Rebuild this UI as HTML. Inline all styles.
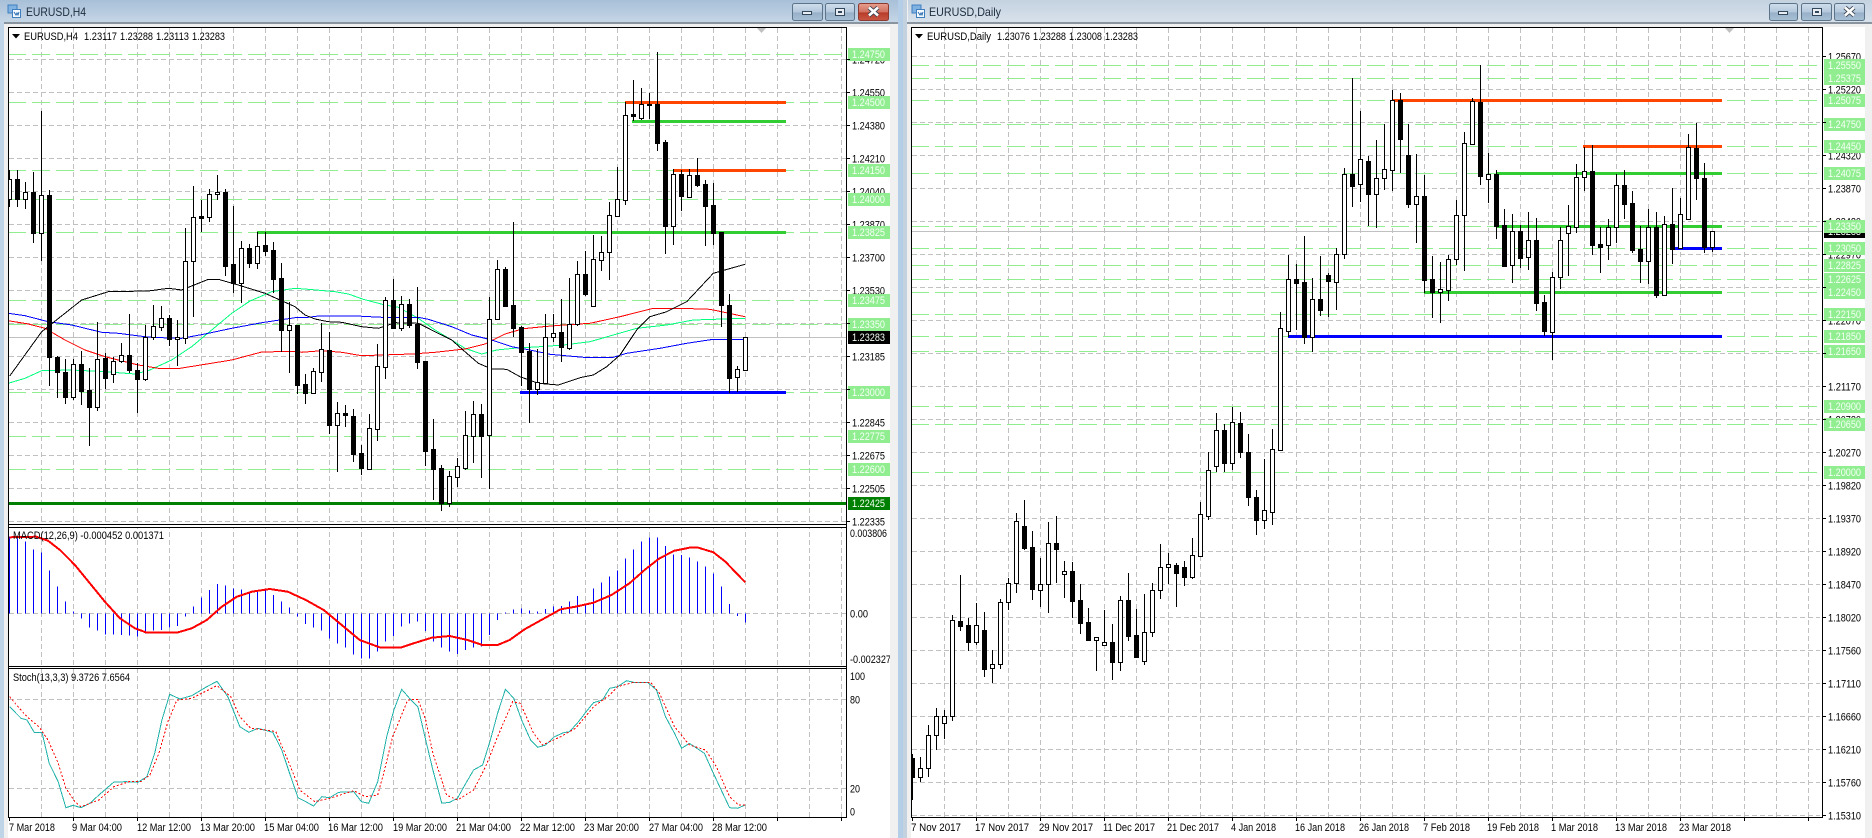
<!DOCTYPE html>
<html><head><meta charset="utf-8"><title>EURUSD</title>
<style>
html,body{margin:0;padding:0;background:#f0f0f0;width:1872px;height:838px;overflow:hidden}
svg{display:block}
text{font-family:"Liberation Sans",sans-serif;font-size:11px;fill:#000}
.w text,text.w{fill:#f4fff4}
.t{font-size:12px;fill:#1c2c3c}
</style></head><body>
<svg xmlns="http://www.w3.org/2000/svg" width="1872" height="838" viewBox="0 0 1872 838">
<defs>
<linearGradient id="t1" x1="0" y1="0" x2="0" y2="1"><stop offset="0" stop-color="#a8c0d8"/><stop offset="1" stop-color="#c6d6e6"/></linearGradient>
<linearGradient id="t2" x1="0" y1="0" x2="0" y2="1"><stop offset="0" stop-color="#c4d2e0"/><stop offset="1" stop-color="#d8e2ec"/></linearGradient>
<linearGradient id="b" x1="0" y1="0" x2="0" y2="1"><stop offset="0" stop-color="#d0deec"/><stop offset=".5" stop-color="#b4c8dc"/><stop offset=".55" stop-color="#98b0c8"/><stop offset="1" stop-color="#a8c0d6"/></linearGradient>
<linearGradient id="r" x1="0" y1="0" x2="0" y2="1"><stop offset="0" stop-color="#e8a090"/><stop offset=".5" stop-color="#d07060"/><stop offset=".55" stop-color="#b83c28"/><stop offset="1" stop-color="#c85844"/></linearGradient>
<clipPath id="lm"><rect x="9" y="28" width="837" height="496"/></clipPath>
<clipPath id="lw"><rect x="9" y="28" width="837" height="790"/></clipPath>
<clipPath id="rm"><rect x="912" y="28" width="910" height="790"/></clipPath>
</defs>
<rect width="1872" height="838" fill="#f0f0f0"/>
<rect x="0" y="0" width="898" height="23" fill="url(#t1)"/>
<rect x="908" y="0" width="964" height="23" fill="url(#t2)"/>
<rect x="0" y="23" width="4" height="815" fill="#c0d4e8"/>
<rect x="898" y="0" width="5" height="838" fill="#b4cee8"/>
<rect x="903" y="0" width="4" height="838" fill="#c4d2e0"/>
<rect x="4" y="22" width="894" height="2" fill="#8a949e"/>
<rect x="907" y="22" width="965" height="2" fill="#8a949e"/>
<rect x="8" y="27" width="882" height="811" fill="#fff"/>
<rect x="911" y="27" width="954" height="811" fill="#fff"/>

<!-- title icons -->
<g shape-rendering="crispEdges">
<rect x="8" y="5" width="9" height="8" fill="#7fb2e0" stroke="#3f7fc0"/><rect x="12.5" y="9.5" width="8" height="8" fill="#f4f9ff" stroke="#3f7fc0"/>
<rect x="912" y="5" width="9" height="8" fill="#7fb2e0" stroke="#3f7fc0"/><rect x="916.5" y="9.5" width="8" height="8" fill="#f4f9ff" stroke="#3f7fc0"/>
</g>
<path d="M14 12l2 3 1-2 1 2 1-3M918 12l2 3 1-2 1 2 1-3" fill="none" stroke="#2a6cb0"/>
<text class="t" x="26" y="16" textLength="60" lengthAdjust="spacingAndGlyphs">EURUSD,H4</text>
<text class="t" x="929" y="16" textLength="72" lengthAdjust="spacingAndGlyphs">EURUSD,Daily</text>

<!-- window buttons -->
<g stroke="#5c7489">
<rect x="792.5" y="3.5" width="30" height="17" rx="2" fill="url(#b)"/>
<rect x="825.5" y="3.5" width="29" height="17" rx="2" fill="url(#b)"/>
<rect x="858.5" y="3.5" width="30" height="17" rx="2" fill="url(#r)" stroke="#8c3a30"/>
<rect x="1769.5" y="3.5" width="28" height="17" rx="2" fill="url(#b)"/>
<rect x="1801.5" y="3.5" width="30" height="17" rx="2" fill="url(#b)"/>
<rect x="1834.5" y="3.5" width="30" height="17" rx="2" fill="url(#b)"/>
</g>
<g shape-rendering="crispEdges" stroke="#33475a" fill="#e8eef4">
<rect x="802.5" y="11.5" width="9" height="3"/><rect x="1778.5" y="11.5" width="9" height="3"/>
<rect x="835.5" y="8.5" width="9" height="7"/><rect x="1812.5" y="8.5" width="9" height="7"/>
</g>
<rect x="838" y="11" width="4" height="2" fill="#33475a"/><rect x="1815" y="11" width="4" height="2" fill="#33475a"/>
<path d="M869 7.5l9 8M878 7.5l-9 8M1845 7.5l9 8M1854 7.5l-9 8" stroke="#3a4450" stroke-width="4.4" fill="none"/>
<path d="M869 7.5l9 8M878 7.5l-9 8M1845 7.5l9 8M1854 7.5l-9 8" stroke="#fff" stroke-width="2.6" fill="none"/>

<g id="lg" shape-rendering="crispEdges"></g>
<g id="lmain" clip-path="url(#lm)" shape-rendering="crispEdges"></g>
<g id="lsub" clip-path="url(#lw)" shape-rendering="crispEdges"></g>
<g id="rmain" clip-path="url(#rm)" shape-rendering="crispEdges"></g>

<!-- panel borders -->
<g shape-rendering="crispEdges">
<rect x="9" y="524" width="838" height="4" fill="#fff"/><rect x="9" y="666" width="838" height="3" fill="#fff"/>
<rect x="8" y="27" width="839" height="1" fill="#000"/>
<rect x="8" y="524" width="839" height="1" fill="#000"/><rect x="8" y="527" width="839" height="1" fill="#000"/>
<rect x="8" y="666" width="839" height="1" fill="#000"/><rect x="8" y="668" width="839" height="1" fill="#000"/>
<rect x="8" y="817" width="839" height="1" fill="#000"/>
<rect x="8" y="27" width="1" height="791" fill="#000"/><rect x="846" y="27" width="1" height="791" fill="#000"/>
<rect x="911" y="27" width="912" height="1" fill="#000"/><rect x="911" y="817" width="912" height="1" fill="#000"/>
<rect x="911" y="27" width="1" height="791" fill="#000"/><rect x="1822" y="27" width="1" height="791" fill="#000"/>
</g>
<path d="M12 34h8l-4 4.5zM915 34h8l-4 4.5z" fill="#000"/>
<path d="M757 28h9l-4.500 5zM1725 28h9l-4.500 5z" fill="#c0c0c0"/>

<!-- chart headers -->
<text x="24" y="40" textLength="54" lengthAdjust="spacingAndGlyphs">EURUSD,H4</text>
<text x="84" y="40" textLength="33" lengthAdjust="spacingAndGlyphs">1.23117</text>
<text x="120" y="40" textLength="33" lengthAdjust="spacingAndGlyphs">1.23288</text>
<text x="156" y="40" textLength="33" lengthAdjust="spacingAndGlyphs">1.23113</text>
<text x="192" y="40" textLength="33" lengthAdjust="spacingAndGlyphs">1.23283</text>
<text x="927" y="40" textLength="64" lengthAdjust="spacingAndGlyphs">EURUSD,Daily</text>
<text x="997" y="40" textLength="33" lengthAdjust="spacingAndGlyphs">1.23076</text>
<text x="1033" y="40" textLength="33" lengthAdjust="spacingAndGlyphs">1.23288</text>
<text x="1069" y="40" textLength="33" lengthAdjust="spacingAndGlyphs">1.23008</text>
<text x="1105" y="40" textLength="33" lengthAdjust="spacingAndGlyphs">1.23283</text>
<text x="13" y="539" textLength="151" lengthAdjust="spacingAndGlyphs">MACD(12,26,9) -0.000452 0.001371</text>
<text x="13" y="681" textLength="117" lengthAdjust="spacingAndGlyphs">Stoch(13,3,3) 9.3726 7.6564</text>

<!-- left price axis -->
<g>
<text x="852" y="63.500" textLength="33" lengthAdjust="spacingAndGlyphs">1.24720</text>
<text x="852" y="96.500" textLength="33" lengthAdjust="spacingAndGlyphs">1.24550</text>
<text x="852" y="129.500" textLength="33" lengthAdjust="spacingAndGlyphs">1.24380</text>
<text x="852" y="162.500" textLength="33" lengthAdjust="spacingAndGlyphs">1.24210</text>
<text x="852" y="195.500" textLength="33" lengthAdjust="spacingAndGlyphs">1.24040</text>
<text x="852" y="228.500" textLength="33" lengthAdjust="spacingAndGlyphs">1.23870</text>
<text x="852" y="261.500" textLength="33" lengthAdjust="spacingAndGlyphs">1.23700</text>
<text x="852" y="294.500" textLength="33" lengthAdjust="spacingAndGlyphs">1.23530</text>
<text x="852" y="327.500" textLength="33" lengthAdjust="spacingAndGlyphs">1.23360</text>
<text x="852" y="360.500" textLength="33" lengthAdjust="spacingAndGlyphs">1.23185</text>
<text x="852" y="393.500" textLength="33" lengthAdjust="spacingAndGlyphs">1.23015</text>
<text x="852" y="426.500" textLength="33" lengthAdjust="spacingAndGlyphs">1.22845</text>
<text x="852" y="459.500" textLength="33" lengthAdjust="spacingAndGlyphs">1.22675</text>
<text x="852" y="492.500" textLength="33" lengthAdjust="spacingAndGlyphs">1.22505</text>
<text x="852" y="525.500" textLength="33" lengthAdjust="spacingAndGlyphs">1.22335</text>
<text x="850" y="537" textLength="37" lengthAdjust="spacingAndGlyphs">0.003806</text>
<text x="850" y="617.500" textLength="18" lengthAdjust="spacingAndGlyphs">0.00</text>
<text x="850" y="663" textLength="41" lengthAdjust="spacingAndGlyphs">-0.002327</text>
<text x="850" y="680" textLength="15" lengthAdjust="spacingAndGlyphs">100</text>
<text x="850" y="703.500" textLength="10" lengthAdjust="spacingAndGlyphs">80</text>
<text x="850" y="792.500" textLength="10" lengthAdjust="spacingAndGlyphs">20</text>
<text x="850" y="815.500" textLength="5" lengthAdjust="spacingAndGlyphs">0</text>
</g>
<rect x="890" y="524" width="8" height="150" fill="#f0f0f0"/>
<g shape-rendering="crispEdges">
<rect x="848" y="331" width="42" height="13" fill="#000"/>
<rect x="848" y="497" width="42" height="13" fill="#008000"/>
<g fill="#90ee90">
<rect x="848" y="48" width="42" height="13"/><rect x="848" y="96" width="42" height="13"/><rect x="848" y="164" width="42" height="13"/><rect x="848" y="193" width="42" height="13"/><rect x="848" y="226" width="42" height="13"/><rect x="848" y="294" width="42" height="13"/><rect x="848" y="318" width="42" height="13"/><rect x="848" y="386" width="42" height="13"/><rect x="848" y="430" width="42" height="13"/><rect x="848" y="463" width="42" height="13"/>
</g></g>
<g class="w">
<text x="852" y="58" textLength="33" lengthAdjust="spacingAndGlyphs">1.24750</text>
<text x="852" y="106" textLength="33" lengthAdjust="spacingAndGlyphs">1.24500</text>
<text x="852" y="174" textLength="33" lengthAdjust="spacingAndGlyphs">1.24150</text>
<text x="852" y="203" textLength="33" lengthAdjust="spacingAndGlyphs">1.24000</text>
<text x="852" y="236" textLength="33" lengthAdjust="spacingAndGlyphs">1.23825</text>
<text x="852" y="304" textLength="33" lengthAdjust="spacingAndGlyphs">1.23475</text>
<text x="852" y="328" textLength="33" lengthAdjust="spacingAndGlyphs">1.23350</text>
<text x="852" y="341" textLength="33" lengthAdjust="spacingAndGlyphs">1.23283</text>
<text x="852" y="396" textLength="33" lengthAdjust="spacingAndGlyphs">1.23000</text>
<text x="852" y="440" textLength="33" lengthAdjust="spacingAndGlyphs">1.22775</text>
<text x="852" y="473" textLength="33" lengthAdjust="spacingAndGlyphs">1.22600</text>
<text x="852" y="507" textLength="33" lengthAdjust="spacingAndGlyphs">1.22425</text>
</g>

<!-- right price axis -->
<g>
<text x="1828" y="60.500" textLength="33" lengthAdjust="spacingAndGlyphs">1.25670</text>
<text x="1828" y="93.500" textLength="33" lengthAdjust="spacingAndGlyphs">1.25220</text>
<text x="1828" y="126.500" textLength="33" lengthAdjust="spacingAndGlyphs">1.24770</text>
<text x="1828" y="159.500" textLength="33" lengthAdjust="spacingAndGlyphs">1.24320</text>
<text x="1828" y="192.500" textLength="33" lengthAdjust="spacingAndGlyphs">1.23870</text>
<text x="1828" y="225.500" textLength="33" lengthAdjust="spacingAndGlyphs">1.23420</text>
<text x="1828" y="258.500" textLength="33" lengthAdjust="spacingAndGlyphs">1.22970</text>
<text x="1828" y="291.500" textLength="33" lengthAdjust="spacingAndGlyphs">1.22520</text>
<text x="1828" y="324.500" textLength="33" lengthAdjust="spacingAndGlyphs">1.22070</text>
<text x="1828" y="357.500" textLength="33" lengthAdjust="spacingAndGlyphs">1.21620</text>
<text x="1828" y="390.500" textLength="33" lengthAdjust="spacingAndGlyphs">1.21170</text>
<text x="1828" y="423.500" textLength="33" lengthAdjust="spacingAndGlyphs">1.20720</text>
<text x="1828" y="456.500" textLength="33" lengthAdjust="spacingAndGlyphs">1.20270</text>
<text x="1828" y="489.500" textLength="33" lengthAdjust="spacingAndGlyphs">1.19820</text>
<text x="1828" y="522.500" textLength="33" lengthAdjust="spacingAndGlyphs">1.19370</text>
<text x="1828" y="555.500" textLength="33" lengthAdjust="spacingAndGlyphs">1.18920</text>
<text x="1828" y="588.500" textLength="33" lengthAdjust="spacingAndGlyphs">1.18470</text>
<text x="1828" y="621.500" textLength="33" lengthAdjust="spacingAndGlyphs">1.18020</text>
<text x="1828" y="654.500" textLength="33" lengthAdjust="spacingAndGlyphs">1.17560</text>
<text x="1828" y="687.500" textLength="33" lengthAdjust="spacingAndGlyphs">1.17110</text>
<text x="1828" y="720.500" textLength="33" lengthAdjust="spacingAndGlyphs">1.16660</text>
<text x="1828" y="753.500" textLength="33" lengthAdjust="spacingAndGlyphs">1.16210</text>
<text x="1828" y="786.500" textLength="33" lengthAdjust="spacingAndGlyphs">1.15760</text>
<text x="1828" y="819.500" textLength="33" lengthAdjust="spacingAndGlyphs">1.15310</text>
</g>
<g shape-rendering="crispEdges">
<rect x="1824" y="225" width="41" height="13" fill="#000"/>
</g>
<text class="w" x="1828" y="235" textLength="33" lengthAdjust="spacingAndGlyphs">1.23283</text>
<g shape-rendering="crispEdges" fill="#90ee90">
<rect x="1824" y="59" width="41" height="13"/><rect x="1824" y="72" width="41" height="13"/><rect x="1824" y="94" width="41" height="13"/><rect x="1824" y="118" width="41" height="13"/><rect x="1824" y="140" width="41" height="13"/><rect x="1824" y="167" width="41" height="13"/><rect x="1824" y="220" width="41" height="13"/><rect x="1824" y="242" width="41" height="13"/><rect x="1824" y="259" width="41" height="13"/><rect x="1824" y="273" width="41" height="13"/><rect x="1824" y="286" width="41" height="13"/><rect x="1824" y="308" width="41" height="13"/><rect x="1824" y="330" width="41" height="13"/><rect x="1824" y="345" width="41" height="13"/><rect x="1824" y="400" width="41" height="13"/><rect x="1824" y="418" width="41" height="13"/><rect x="1824" y="466" width="41" height="13"/>
</g>
<g class="w">
<text x="1828" y="69" textLength="33" lengthAdjust="spacingAndGlyphs">1.25550</text>
<text x="1828" y="82" textLength="33" lengthAdjust="spacingAndGlyphs">1.25375</text>
<text x="1828" y="104" textLength="33" lengthAdjust="spacingAndGlyphs">1.25075</text>
<text x="1828" y="128" textLength="33" lengthAdjust="spacingAndGlyphs">1.24750</text>
<text x="1828" y="150" textLength="33" lengthAdjust="spacingAndGlyphs">1.24450</text>
<text x="1828" y="177" textLength="33" lengthAdjust="spacingAndGlyphs">1.24075</text>
<text x="1828" y="230" textLength="33" lengthAdjust="spacingAndGlyphs">1.23350</text>
<text x="1828" y="252" textLength="33" lengthAdjust="spacingAndGlyphs">1.23050</text>
<text x="1828" y="269" textLength="33" lengthAdjust="spacingAndGlyphs">1.22825</text>
<text x="1828" y="283" textLength="33" lengthAdjust="spacingAndGlyphs">1.22625</text>
<text x="1828" y="296" textLength="33" lengthAdjust="spacingAndGlyphs">1.22450</text>
<text x="1828" y="318" textLength="33" lengthAdjust="spacingAndGlyphs">1.22150</text>
<text x="1828" y="340" textLength="33" lengthAdjust="spacingAndGlyphs">1.21850</text>
<text x="1828" y="355" textLength="33" lengthAdjust="spacingAndGlyphs">1.21650</text>
<text x="1828" y="410" textLength="33" lengthAdjust="spacingAndGlyphs">1.20900</text>
<text x="1828" y="428" textLength="33" lengthAdjust="spacingAndGlyphs">1.20650</text>
<text x="1828" y="476" textLength="33" lengthAdjust="spacingAndGlyphs">1.20000</text>
</g>

<!-- time axes -->
<g>
<text x="9" y="831" textLength="46" lengthAdjust="spacingAndGlyphs">7 Mar 2018</text>
<text x="72" y="831" textLength="50" lengthAdjust="spacingAndGlyphs">9 Mar 04:00</text>
<text x="137" y="831" textLength="54" lengthAdjust="spacingAndGlyphs">12 Mar 12:00</text>
<text x="200" y="831" textLength="55" lengthAdjust="spacingAndGlyphs">13 Mar 20:00</text>
<text x="264" y="831" textLength="55" lengthAdjust="spacingAndGlyphs">15 Mar 04:00</text>
<text x="328" y="831" textLength="55" lengthAdjust="spacingAndGlyphs">16 Mar 12:00</text>
<text x="393" y="831" textLength="54" lengthAdjust="spacingAndGlyphs">19 Mar 20:00</text>
<text x="456" y="831" textLength="55" lengthAdjust="spacingAndGlyphs">21 Mar 04:00</text>
<text x="520" y="831" textLength="55" lengthAdjust="spacingAndGlyphs">22 Mar 12:00</text>
<text x="584" y="831" textLength="55" lengthAdjust="spacingAndGlyphs">23 Mar 20:00</text>
<text x="649" y="831" textLength="54" lengthAdjust="spacingAndGlyphs">27 Mar 04:00</text>
<text x="712" y="831" textLength="55" lengthAdjust="spacingAndGlyphs">28 Mar 12:00</text>
<text x="911" y="831" textLength="50" lengthAdjust="spacingAndGlyphs">7 Nov 2017</text>
<text x="975" y="831" textLength="54" lengthAdjust="spacingAndGlyphs">17 Nov 2017</text>
<text x="1039" y="831" textLength="54" lengthAdjust="spacingAndGlyphs">29 Nov 2017</text>
<text x="1103" y="831" textLength="52" lengthAdjust="spacingAndGlyphs">11 Dec 2017</text>
<text x="1167" y="831" textLength="52" lengthAdjust="spacingAndGlyphs">21 Dec 2017</text>
<text x="1231" y="831" textLength="45" lengthAdjust="spacingAndGlyphs">4 Jan 2018</text>
<text x="1295" y="831" textLength="50" lengthAdjust="spacingAndGlyphs">16 Jan 2018</text>
<text x="1359" y="831" textLength="50" lengthAdjust="spacingAndGlyphs">26 Jan 2018</text>
<text x="1423" y="831" textLength="47" lengthAdjust="spacingAndGlyphs">7 Feb 2018</text>
<text x="1487" y="831" textLength="52" lengthAdjust="spacingAndGlyphs">19 Feb 2018</text>
<text x="1551" y="831" textLength="47" lengthAdjust="spacingAndGlyphs">1 Mar 2018</text>
<text x="1615" y="831" textLength="52" lengthAdjust="spacingAndGlyphs">13 Mar 2018</text>
<text x="1679" y="831" textLength="52" lengthAdjust="spacingAndGlyphs">23 Mar 2018</text>
</g>
<g id="ticks" shape-rendering="crispEdges"></g>
</svg>
<script>
(function(){
var NS='http://www.w3.org/2000/svg',$=function(i){return document.getElementById(i)};
function el(g,t,a){var e=document.createElementNS(NS,t);for(var k in a)e.setAttribute(k,a[k]);g.appendChild(e);return e}
function path(g,d,s,w,dash){var a={d:d,stroke:s,'stroke-width':w||1,fill:'none'};if(dash)a['stroke-dasharray']=dash;return el(g,'path',a)}
function line(g,pts,s,w,dash){return path(g,'M'+pts.join('L'),s,w,dash)}
function z3(ox,oy,str){return str.trim().split(/\s+/).map(function(p){var q=p.split(',');return (ox+q[0]/3).toFixed(1)+','+(oy+q[1]/3).toFixed(1)})}
function z2(str){return str.trim().split(/\s+/).map(function(p){var q=p.split(',');return (q[0]/1.668).toFixed(1)+','+(420+q[1]/3).toFixed(1)})}
var G='#c0c0c0',LG='#90ee90';

/* ---------- candles ---------- */
function candles(g,x0,start,oy,str){
  var wick='',blk='',wht='';
  str.split(',').forEach(function(r,n){
    var a=r.trim().split(/\s+/),x=x0+8*(start+n),
        hi=Math.round(oy+a[1]/3),t=Math.round(oy+a[2]/3),b=Math.round(oy+a[3]/3),lo=Math.round(oy+a[4]/3);
    if(b<=t)b=t+1;
    wick+='M'+(x+.5)+' '+hi+'V'+lo;
    if(a[0]=='b')blk+='M'+(x-2)+' '+t+'h5V'+(b+1)+'h-5z';
    else wht+='M'+(x-1.5)+' '+(t+.5)+'h4V'+(b+.5)+'h-4z';
  });
  path(g,wick,'#000',1);
  el(g,'path',{d:wht,fill:'#fff',stroke:'#000','stroke-width':1});
  el(g,'path',{d:blk,fill:'#000'});
}

/* ---------- LEFT GRID ---------- */
var lg=$('lg'),d='';
for(var x=41.5;x<846;x+=32)d+='M'+x+' 28V817';
var gl=path(lg,d,G,1,'5 3');
var lm=$('lmain');
d='';for(var k=0;k<15;k++)d+='M9 '+(59.5+33*k)+'H846';
path(lm,d,G,1,'5 3');
d='';[54.5,102.5,170.5,199.5,232.5,300.5,324.5,392.5,436.5,469.5].forEach(function(y){d+='M8 '+y+'H844'});
path(lm,d,LG,1,'18 6');
path(lm,'M9 337.5H846',G,1);
path(lm,'M625 102.500H786M673 170.500H786','#ff4500',3);
path(lm,'M632 121.500H786M257 232.500H786','#32cd32',3);
path(lm,'M520 392.500H786','#0000ff',3);
path(lm,'M9 503.500H846','#008000',3);

/* MAs */
line(lm,z3(5,150,'10,700 60,685 110,662 200,660 300,665 390,672 430,662 500,630 560,590 620,540 680,490 735,453 800,425 870,415')
 .concat(z3(285,190,'70,298 150,305 190,312 235,328 300,345 340,352 400,385 450,420 500,450 540,475 590,492'))
 .concat(z3(480,40,'30,935 50,930 100,925 180,920 250,915 330,905 400,885 470,865 560,855 640,840 795,835')),'#00ff7f');
line(lm,z3(5,150,'10,512 70,522 120,535 180,570 240,600 300,620 400,645 460,655 525,655 600,643 680,630 770,606 870,604')
 .concat(z3(285,190,'50,487 110,482 170,487 230,497 290,495 380,492 450,487 540,477 600,462 660,432'))
 .concat(z3(480,40,'130,866 190,860 250,855 330,850 420,830 520,805 600,805 690,808 795,830')),'#ff0000');
line(lm,z3(5,150,'10,490 60,497 130,515 200,525 290,547 340,550 420,560 470,563 530,565 600,552 680,535 770,518 870,503')
 .concat(z3(285,190,'60,383 100,378 215,378 290,382 400,382 430,388 500,410 560,435 620,450 680,470'))
 .concat(z3(480,40,'150,930 210,943 310,952 400,952 440,940 540,925 620,910 700,898 795,898')),'#0000ff');
line(lm,z3(5,150,'14,678 110,545 230,450 310,425 430,423 490,415 530,420 610,388 640,388 700,405 780,430 870,470')
 .concat(z3(285,190,'60,375 90,387 130,395 170,397 230,410 280,415 310,405 330,398 400,400 450,425 500,450 540,485 580,520 620,537 665,538'))
 .concat(z3(480,40,'120,1010 175,1030 235,1035 300,1013 340,1005 380,980 420,945 470,870 510,830 560,815 620,785 700,700 795,673')),'#000');

/* left candles */
candles(lm,9,0,150,'w 60 88 148 170,b 60 88 148 172,w 95 127 148 177,b 66 127 250 278,w -117 136 250 332,b 120 136 622 708,b 617 622 667 743,b 628 667 740 762,w 627 643 740 750,b 603 643 722 765,b 655 720 770 888,w 515 628 770 782,b 608 625 683 718,w 622 634 673 698,w 580 616 634 640,b 492 616 660 668,b 640 660 686 790,w 525 560 686 692,w 466 528 562 570,w 468 505 530 543,b 495 505 568 588,w 510 560 568 648,w 235 334 564 582,w 108 202 332 500,b 150 199 203 246,w 118 133 200 215,w 75 127 133 150,b 118 127 347 378,b 168 343 400 430,w 274 295 398 458,b 282 295 338 355,w 245 289 338 357,b 245 286 302 318,b 275 301 386 430,b 340 385 540 605,w 455 526 540 668');
candles(lm,9,36,190,'b 405 405 584 612,b 552 582 608 642,w 534 544 608 612,w 400 478 545 575,b 427 481 704 732,w 636 670 704 846,b 645 670 675 711,b 657 678 792 816,b 766 790 833 855,w 672 715 836 836,w 462 529 716 752,w 322 331 530 566,b 268 331 414 418,w 319 343 413 422,b 327 343 404 414,b 292 402 516 536,b 514 514 783 828,b 687 778 836 930,b 826 835 940 962,w 844 859 940 950,w 804 829 860 892,w 663 736 833 840,w 633 673 737 818,b 642 673 737 864,w 322 388 734 898,w 210 238 388 388,b 232 238 348 350,b 97 346 413 440,b 408 412 485 588,b 460 483 596 698,w 478 577 596 614,w 372 442 578 582,w 372 428 442 456,b 328 427 470 516,w 265 401 473 480');
candles(lm,9,71,40,'w 663 703 851 858,b 632 702 761 767,w 585 658 797 797,w 588 637 659 693,w 487 526 637 719,w 380 478 527 527,w 187 226 479 495,b 120 222 228 242,w 145 193 233 240,b 160 191 195 237,b 37 191 308 333,b 300 306 557 642,w 388 403 557 615,b 390 402 468 513,w 388 406 470 473,b 354 405 434 440,b 420 432 497 618,b 430 495 579 615,b 576 576 795 860,b 762 795 1013 1060,w 978 988 1012 1056,w 891 892 989 992');

/* ---------- LEFT SUB WINDOWS ---------- */
var ls=$('lsub');
path(ls,'M9 613.500H846M9 699.500H846M9 788.500H846',G,1,'5 3');
var tops=[350,355,365,388,398,452,500,545,575,596,622,632,643,643,645,647,650,640,632,630,622,618,590,560,533,510,492,497,505,508,515,512,510,525,545,563,590,612,622,632,655,670,683,703,715,715,695,665,648,620,610,605,633,665,682,695,702,690,683,680,645,600,578,568,565,572,575,567,560,558,545,528,550,505,488,470,452,415,388,365,352,352,378,403,405,413,425,440,460,500,552,588,608];
d='';tops.forEach(function(t,i){d+='M'+(9.5+8*i)+' 613.5V'+(420+t/3).toFixed(1)});
path(ls,d,'#0000ff',1);
line(ls,z2('16,352 60,350 80,362 100,390 125,435 150,490 175,545 200,595 225,625 245,638 295,638 320,625 345,600 370,560 395,530 420,515 450,507 480,515 510,540 540,570 570,615 600,660 635,683 668,683 690,670 720,653 750,648 780,660 805,675 830,675 850,660 875,628 905,598 935,568 960,560 990,548 1020,525 1050,490 1075,450 1100,415 1125,392 1150,383 1165,383 1190,397 1210,425 1243,487'),'#ff0000',2);
line(ls,z2('16,860 35,895 45,900 57,937 70,937 82,1030 97,1085 110,1163 122,1156 135,1163 150,1150 165,1125 190,1086 210,1085 230,1087 245,1070 258,1000 270,900 283,823 300,837 320,827 345,800 362,784 380,830 400,920 415,937 430,925 455,937 470,990 483,1060 497,1133 510,1145 523,1158 537,1130 550,1133 565,1117 590,1115 603,1145 615,1150 630,1085 645,950 657,870 670,808 683,835 697,860 710,960 722,1050 737,1150 750,1147 763,1135 777,1090 790,1050 805,1035 818,960 830,880 843,808 857,835 870,900 885,960 897,982 910,975 925,950 940,938 950,935 965,905 980,870 990,848 1005,840 1017,805 1030,800 1045,782 1057,787 1080,787 1095,810 1110,890 1125,940 1137,985 1150,970 1175,1000 1190,1060 1203,1110 1217,1163 1230,1165 1243,1155'),'#20b2aa');
line(ls,z2('16,830 30,860 45,890 65,920 80,960 97,1030 110,1105 125,1145 135,1160 165,1140 190,1100 215,1085 235,1085 250,1065 265,1000 280,905 295,840 320,835 345,812 362,797 385,830 400,890 418,925 445,930 460,935 480,1020 500,1110 525,1145 550,1135 590,1112 610,1130 630,1125 640,1060 655,950 680,840 697,838 710,900 722,1000 745,1125 763,1140 790,1110 810,1040 830,950 855,845 868,850 890,940 905,975 935,950 960,925 990,860 1017,825 1030,800 1057,787 1085,787 1100,820 1125,920 1150,975 1177,990 1195,1040 1217,1130 1232,1155 1243,1155'),'#ff0000',1,'2 2');

/* ---------- RIGHT ---------- */
var rm=$('rmain');
d='';for(x=944.5;x<1822;x+=32)d+='M'+x+' 28V817';
for(k=0;k<24;k++)d+='M912 '+(56.5+33*k)+'H1820';
path(rm,d,G,1,'5 3');
d='';[65.5,78.5,100.5,124.5,146.5,173.5,226.5,248.5,265.5,279.5,292.5,314.5,336.5,351.5,406.5,424.5,472.5].forEach(function(y){d+='M911 '+y+'H1820'});
path(rm,d,LG,1,'18 6');
path(rm,'M912 231.500H1822',G,1);
path(rm,'M1392 100.500H1722M1583 146.500H1722','#ff4500',3);
path(rm,'M1496 173.500H1722M1496 226.500H1722M1424 292.500H1722','#32cd32',3);
path(rm,'M1673 248.500H1722M1288 336.500H1722','#0000ff',3);
candles(rm,912,0,420,'b 1002 1014 1070 1140,w 1012 1045 1070 1085,w 915 946 1045 1070,w 865 889 946 990,w 870 889 910 956,w 585 601 889 902,b 465 603 617 632,b 595 616 665 692,w 549 616 665 675,b 577 631 746 770,w 690 733 745 790,w 538 547 733 746,w 475 488 547 570,w 280 304 488 518,b 240 319 383 390,b 334 382 506 540,w 415 493 509 560,w 306 370 493 578,b 289 370 386 488,w 424 454 461 533,b 427 454 542 595,b 493 541 608 642,b 564 607 659 660,w 650 652 659 752,w 570 667 674 678,b 612 667 725 780,w 529 541 725 752,b 460 541 647 662,b 567 646 710 710,w 522 637 722 735,w 490 511 637 650,w 373 442 511 537,w 400 433 442 491,b 430 436 458 560,b 423 442 470 498,w 354 406 470 476,w 245 283 407 407,w 97 151 287 300,w -21 31 137 157,b 13 31 128 155,w -40 7 128 150,b -24 9 96 113,b 42 97 230 257,b 210 232 299 345,w 118 271 299 327,w 28 88 275 315');
candles(rm,912,46,50,'w 787 835 1201 1201,w 615 688 842 860,b 642 687 698 840,b 558 696 862 882,w 685 748 862 905,b 618 748 779 798,b 670 675 692 800,w 595 613 695 780,w 355 373 613 627,b 85 373 407 470,w 183 328 403 456,b 318 334 431 528,w 270 385 431 533,w 222 358 385 420,w 120 151 361 422,b 130 151 266 368,b 222 316 461 473,w 312 439 463 578,b 375 439 690 730,b 618 688 725 803,w 637 718 727 818,w 615 628 721 752,w 450 496 628 645,w 245 280 496 662,w 145 154 281 285,b 45 156 377 404,w 310 373 386 458,b 360 373 527 566,b 477 526 648 650,w 492 544 646 698,b 526 544 623 654,w 487 571 622 660,b 505 571 758 782,b 735 757 842 858,w 666 682 845 930,w 530 571 682 716,w 465 529 550 678,w 343 382 532 548,w 290 364 382 423,b 285 363 584 614,b 530 582 590 668,w 507 532 586 630,w 372 406 532 580,b 360 406 461 507,b 423 459 599 608,b 528 597 632 698,w 477 532 634 702,b 487 531 734 743,w 498 523 734 737,b 414 522 597 642,w 444 493 595 597,w 252 292 508 508,b 220 294 383 450,b 340 385 591 608,w 544 544 590 605');

/* ---------- ticks ---------- */
var tk=$('ticks');d='';
for(x=9.5;x<846;x+=64)d+='M'+x+' 818v3';
for(x=912.5;x<1822;x+=64)d+='M'+x+' 818v3';
for(k=0;k<15;k++)d+='M847 '+(59.5+33*k)+'h3';
for(k=0;k<24;k++)d+='M1823 '+(56.5+33*k)+'h3';
path(tk,d,'#000',1);
})();
</script>
</body></html>
